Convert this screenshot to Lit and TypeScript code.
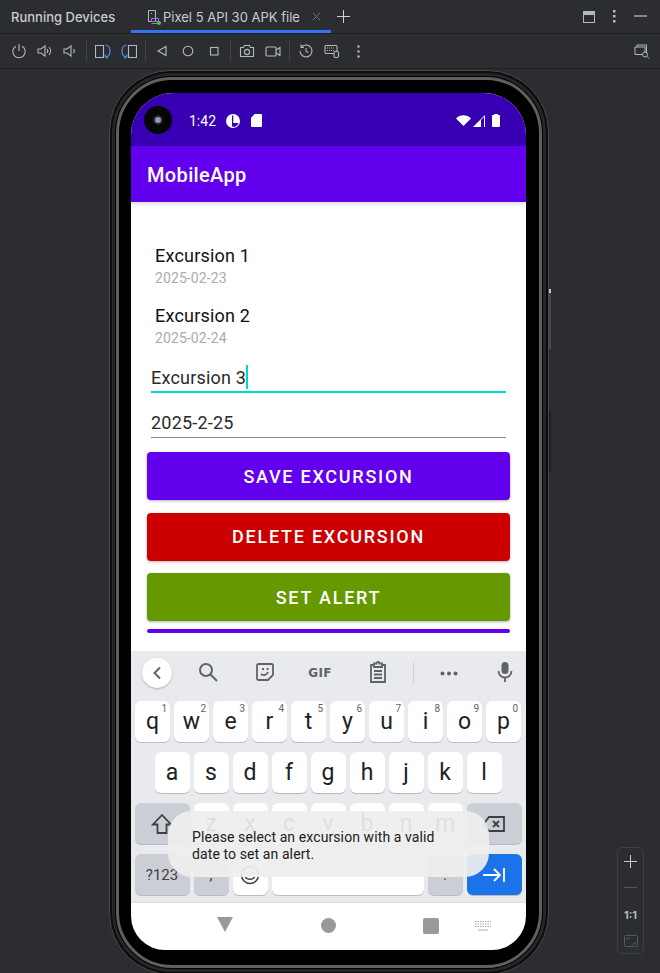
import { LitElement, html, css, svg } from "lit";
import { customElement } from "lit/decorators.js";

const ROW1 = [["q", "1"], ["w", "2"], ["e", "3"], ["r", "4"], ["t", "5"], ["y", "6"], ["u", "7"], ["i", "8"], ["o", "9"], ["p", "0"]];
const ROW2 = ["a", "s", "d", "f", "g", "h", "j", "k", "l"];
const ROW3 = ["z", "x", "c", "v", "b", "n", "m"];

const ic = (w: number, h: number, body: unknown) => html`<svg width=${w} height=${h} viewBox="0 0 ${w} ${h}" fill="none" stroke="#b4b8bf" stroke-width="1.1">${body}</svg>`;

const toolbarLeft = [
  [ic(16, 16, svg`<path d="M4.800 3.200a6.200 6.200 0 1 0 6.400 0M8 1v7"/>`),
   ic(16, 16, svg`<path d="M1 6h3l4-3.200v10.400l-4-3.200H1zM10 6a3 3 0 0 1 0 4M12 4a6 6 0 0 1 0 8"/>`),
   ic(14, 16, svg`<path d="M1 6h3l4-3.200v10.400l-4-3.200H1zM10.500 6a3 3 0 0 1 0 4"/>`)],
  [ic(16, 16, svg`<path d="M.5 2.500h8v12h-8z"/><path stroke="#4f8ff0" d="M10.500 2c3 .5 4.500 2.500 4.500 6 0 3-1.500 5.500-4.500 6.200M10 11.500l.5 2.700 2.500 .8"/>`),
   ic(16, 16, svg`<path stroke="#4f8ff0" d="M5.500 2c-3 .5-4.500 2.500-4.500 6 0 3 1.500 5.500 4.500 6.200M6 11.500l-.5 2.700-2.500 .8"/><path d="M7.500 2.500h8v12h-8z"/>`)],
  [ic(16, 16, svg`<path d="M12 3.500v9L4 8z"/>`),
   ic(16, 16, svg`<circle cx="8" cy="8" r="4.800"/>`),
   ic(16, 16, svg`<rect x="4.500" y="4.500" width="7.500" height="7.500"/>`)],
  [ic(16, 16, svg`<path d="M1.500 4.500h3l1-2h5l1 2h3v9h-13z"/><circle cx="8" cy="9" r="2.600"/>`),
   ic(16, 16, svg`<rect x="1" y="4" width="10" height="9" rx="1"/><path d="M11 7l4-2.500v8L11 10"/>`)],
  [ic(16, 16, svg`<path d="M3.300 4.200A6 6 0 1 1 2 8M3 1.500v3h3M8 5v3.500l2.500 1"/>`),
   ic(16, 16, svg`<rect x="1" y="2.500" width="12" height="8" rx="1"/><path d="M3 5h8M3 7.500h8" stroke-dasharray="1 1"/><rect x="10" y="8.500" width="4.500" height="6" rx="1.500" fill="#2b2d30"/>`)],
];

@customElement("app-root")
export class AppRoot extends LitElement {
  static styles = css`
    :host { display: block; width: 660px; height: 973px; overflow: hidden; background: #2b2d30; font-family: Roboto, "Liberation Sans", sans-serif; }
    .tabs { height: 33px; display: flex; align-items: center; border-bottom: 1px solid #1e1f22; font-family: Inter, "Noto Sans", sans-serif; color: #c9ccd2; font-size: 13px; }
    .tabs .title { margin-left: 11px; width: 134px; font-weight: 500; }
    .tab { width: 200px; box-sizing: border-box; height: 33px; display: flex; align-items: center; border-bottom: 3px solid #3574f0; margin-left: -14px; padding: 3px 0 0 14px; }
    .tab .x { margin-left: 12px; display: flex; }
    .tabs .plus { margin-left: 6px; display: flex; }
    .tabs .right { margin-left: auto; display: flex; align-items: center; gap: 18px; padding-right: 13px; }
    .toolbar { height: 34px; display: flex; align-items: center; padding-left: 11px; border-bottom: 1px solid #1e1f22; }
    .group { display: flex; gap: 10px; align-items: center; }
    .sep { width: 1px; height: 20px; background: #43454a; margin: 0 8px; }
    .group:first-child + .sep { margin-left: 9px; }
    .toolbar svg { display: block; }
    .toolbar .more { margin-left: 17px; }
    .toolbar .end { margin-left: auto; margin-right: 10px; }

    .viewport { display: flex; justify-content: center; position: relative; padding: 1px 2px 0 0; }
    .zoom { position: absolute; left: 617px; top: 778px; width: 27px; height: 107px; box-sizing: border-box; border: 1px solid #3d3f43; border-radius: 5px; display: flex; flex-direction: column; align-items: center; color: #b4b8bf; font-size: 11px; font-weight: 700; font-family: Inter, sans-serif; }
    .zoom .p { margin-top: 7px; }
    .zoom .m { margin-top: 19px; width: 13px; height: 1px; background: #55585d; }
    .zoom .r { margin-top: 20px; }
    .zoom .f { margin-top: 13px; }

    .device { width: 440px; height: 905px; box-sizing: border-box; border-radius: 62px; background: #0c0c0c; border: 1px solid #48494b; padding: 2px; flex: none; position: relative; }
    .ring1 { height: 100%; box-sizing: border-box; border-radius: 60px; border: 3px solid #262626; background: #000; padding: 1px; }
    .ring2 { height: 100%; box-sizing: border-box; border-radius: 56px; border: 3px solid #5f5f5f; background: #000; padding: 13px 9px 0 12px; }
    .side { position: absolute; right: -3px; width: 2px; }
    .side.a { top: 218px; height: 4px; background: #c9c9c9; }
    .side.c { top: 222px; height: 56px; background: #45474a; }
    .side.b { top: 340px; height: 60px; background: #1c1d20; }

    .screen { width: 395px; height: 857px; border-radius: 42px 42px 34px 34px; overflow: hidden; background: #fff; position: relative; display: flex; flex-direction: column; }
    .status { height: 53px; flex: none; background: #3700b3; display: flex; align-items: center; color: #fff; font-size: 14px; padding: 2px 26px 0 13px; box-sizing: border-box; }
    .camera { width: 28px; height: 28px; border-radius: 50%; background: #050505; display: flex; align-items: center; justify-content: center; margin: -2px 17px 0 0; }
    .camera i { width: 6px; height: 6px; border-radius: 50%; background: #8e9bb0; border: 2px solid #24262c; }
    .status .time { margin-right: 10px; font-size: 14px; }
    .status .ics { display: flex; gap: 11px; align-items: center; }
    .status .rgt { margin-left: auto; display: flex; gap: 2px; align-items: center; }
    .status .batt { margin-left: 4px; }
    .status svg { display: block; }
    .appbar { height: 56px; flex: none; background: #6200ee; color: #fff; font-size: 20px; font-weight: 500; letter-spacing: .35px; display: flex; align-items: center; padding: 2px 0 0 16px; box-sizing: border-box; box-shadow: 0 2px 4px rgba(0,0,0,.15); position: relative; }
    .content { height: 449px; flex: none; box-sizing: border-box; padding: 42px 16px 0; display: flex; flex-direction: column; }
    .item { padding-left: 8px; }
    .item.first { margin-bottom: 16px; }
    .item .n { font-size: 18px; color: #111; line-height: 24px; letter-spacing: .2px; }
    .item .d { font-size: 14px; color: #ababab; line-height: 20px; letter-spacing: .1px; }
    .field { margin: 0 4px; width: 355px; font-size: 18px; color: #2a2a2a; height: 45px; box-sizing: border-box; border-bottom: 1px solid #8a8a8a; display: flex; align-items: flex-end; padding-bottom: 2px; line-height: 24px; letter-spacing: .2px; }
    .field.focus { border-bottom: 2px solid #03dac5; padding-bottom: 1px; height: 46px; margin-top: -1px; }
    .caret { width: 2px; height: 24px; background: #03dac5; margin-bottom: 1px; }
    .btn { height: 48px; width: 363px; border-radius: 4px; color: #fff; font-size: 18px; font-weight: 500; letter-spacing: 1.75px; display: flex; align-items: center; justify-content: center; box-shadow: 0 1px 3px rgba(0,0,0,.3); flex: none; margin-top: 12.5px; }
    .btn.first { margin-top: 14px; }
    .btn.save { background: #6200ee; }
    .btn.del { background: #cc0000; }
    .btn.alert { background: #669900; }
    .bar { height: 4px; width: 363px; background: #6200ee; border-radius: 2px; margin-top: 8px; flex: none; }

    .kbd { height: 252px; flex: none; background: #e8eaed; box-sizing: border-box; padding: 0 4px; display: flex; flex-direction: column; border-bottom: 1px solid #dadce0; }
    .strip { height: 50px; display: flex; align-items: center; flex: none; position: relative; }
    .strip .back { width: 30px; height: 30px; border-radius: 50%; background: #fff; box-shadow: 0 1px 2px rgba(0,0,0,.25); display: flex; align-items: center; justify-content: center; margin: -6px 0 0 7px; }
    .strip .tool { position: absolute; top: 10px; transform: translateX(-50%); display: flex; }
    .strip .tool.dots { top: 20px; }
    .gif { font-family: "DejaVu Sans", sans-serif; font-weight: 700; font-size: 12px; color: #5f6368; letter-spacing: .3px; line-height: 24px; }
    .strip .div { position: absolute; left: 278px; top: 11px; width: 1px; height: 22px; background: #cfd1d4; }
    .row { display: flex; gap: 4px; justify-content: center; height: 42px; flex: none; margin-bottom: 9px; margin-left: -1px; }
    .key { width: 35px; height: 41px; border-radius: 6px; background: #fff; box-shadow: 0 1px 0 #b9bbbf; display: flex; align-items: center; justify-content: center; font-size: 23px; color: #202124; position: relative; }
    .key sup { position: absolute; top: 2px; right: 3px; font-size: 10px; line-height: 12px; color: #5f6368; }
    .key.fn { background: #ccced5; }
    .key.wide { width: 55px; }
    .key.space { width: 152px; }
    .key.go { width: 55px; background: #1a73e8; }
    .key.sym { font-size: 15px; color: #3c4043; }
    .nav { flex: 1; position: relative; }
    .nav svg { position: absolute; }
    .toast { position: absolute; left: 37px; top: 718px; width: 321px; height: 66px; box-sizing: border-box; border-radius: 24px; background: rgba(238,238,238,.93); color: #202020; font-size: 14px; line-height: 17px; letter-spacing: .1px; padding: 18px 50px 0 24px; }
  `;

  private field(text: string, focus: boolean) {
    return html`<div class="field ${focus ? "focus" : ""}">${text}${focus ? html`<span class="caret"></span>` : ""}</div>`;
  }

  render() {
    return html`
      <div class="tabs">
        <span class="title">Running Devices</span>
        <div class="tab">
          <svg width="18" height="18" viewBox="0 0 18 18" fill="none" stroke="#b4b8bf"><path d="M3.500 2.500h7v11h-7zM6 5.500h1"/><path stroke="#a074e0" d="M6.500 10.500h7v3h-7zM6.500 15.500h7"/><circle cx="14" cy="15" r="2" fill="#3fcf3f" stroke="none"/></svg>
          <span>Pixel 5 API 30 APK file</span>
          <span class="x"><svg width="9" height="9" viewBox="0 0 9 9" stroke="#6f737a" fill="none"><path d="M1 1l7 7M8 1l-7 7"/></svg></span>
        </div>
        <span class="plus"><svg width="13" height="13" viewBox="0 0 13 13" stroke="#ced0d6" fill="none"><path d="M6.500 0v13M0 6.500h13"/></svg></span>
        <div class="right">
          <svg width="12" height="12" viewBox="0 0 12 12" fill="none" stroke="#b4b8bf"><rect x=".5" y=".5" width="11" height="11"/><rect x="0" y="0" width="12" height="4" fill="#b4b8bf" stroke="none"/></svg>
          <svg width="3" height="13" viewBox="0 0 3 13" fill="#b4b8bf"><rect y="0" width="2.500" height="2.500"/><rect y="5" width="2.500" height="2.500"/><rect y="10" width="2.500" height="2.500"/></svg>
          <svg width="13" height="3" viewBox="0 0 13 3" fill="#85888e"><rect width="13" height="2"/></svg>
        </div>
      </div>
      <div class="toolbar">
        ${toolbarLeft.map((g, i) => html`${i ? html`<span class="sep"></span>` : ""}<div class="group">${g}</div>`)}
        <svg class="more" width="3" height="13" viewBox="0 0 3 13" fill="#b4b8bf"><circle cx="1.500" cy="1.500" r="1.200"/><circle cx="1.500" cy="6.500" r="1.200"/><circle cx="1.500" cy="11.500" r="1.200"/></svg>
        <svg class="end" width="16" height="16" viewBox="0 0 16 16" fill="none" stroke="#b4b8bf"><path d="M3 3V1h9.500v8H11M1 3h10v7.500H1z" transform="translate(0 1)"/><circle cx="11" cy="11.500" r="2.500" fill="#2b2d30"/><path d="M13 13.500l2 2"/></svg>
      </div>
      <div class="viewport">
        <div class="device">
          <span class="side a"></span><span class="side c"></span><span class="side b"></span>
          <div class="ring1"><div class="ring2">
            <div class="screen">
              <div class="status">
                <span class="camera"><i></i></span>
                <span class="time">1:42</span>
                <span class="ics">
                  <svg width="14" height="14" viewBox="0 0 14 14"><circle cx="7" cy="7" r="7" fill="#fff"/><path d="M6 1.500h1.300v11H6zM7.300 9h5.200a6 6 0 0 1-5.200 4z" fill="#3700b3"/></svg>
                  <svg width="11" height="13" viewBox="0 0 11 13"><path d="M3.500 0H10a1 1 0 0 1 1 1v11a1 1 0 0 1-1 1H1a1 1 0 0 1-1-1V4z" fill="#fff"/></svg>
                </span>
                <span class="rgt">
                  <svg width="15" height="11" viewBox="0 0 15 11"><path d="M0 3.500C4 -.9 11 -.9 15 3.500L7.500 11z" fill="#fff"/></svg>
                  <svg width="13" height="12" viewBox="0 0 13 12"><path d="M0 12L12 0v12z" fill="#fff"/><path d="M8 5v7h3V2z" fill="#3700b3"/><path d="M11.500 1v11" stroke="#fff"/></svg>
                  <svg class="batt" width="8" height="13" viewBox="0 0 8 13"><path d="M2 0h4v1h1a1 1 0 0 1 1 1v10a1 1 0 0 1-1 1H1a1 1 0 0 1-1-1V2a1 1 0 0 1 1-1h1z" fill="#fff"/></svg>
                </span>
              </div>
              <div class="appbar">MobileApp</div>
              <div class="content">
                <div class="item first"><div class="n">Excursion 1</div><div class="d">2025-02-23</div></div>
                <div class="item"><div class="n">Excursion 2</div><div class="d">2025-02-24</div></div>
                ${this.field("Excursion 3", true)}
                ${this.field("2025-2-25", false)}
                <div class="btn save first">SAVE EXCURSION</div>
                <div class="btn del">DELETE EXCURSION</div>
                <div class="btn alert">SET ALERT</div>
                <div class="bar"></div>
              </div>
              <div class="kbd">
                <div class="strip">
                  <span class="back"><svg width="10" height="14" viewBox="0 0 10 14" fill="none" stroke="#5f6368" stroke-width="2"><path d="M8 1.500L2.500 7 8 12.500"/></svg></span>
                  <span class="tool" style="left:73px"><svg width="22" height="22" viewBox="0 0 22 22" fill="none" stroke="#5f6368" stroke-width="2"><circle cx="9" cy="9" r="6"/><path d="M13.500 13.500L20 20"/></svg></span>
                  <span class="tool" style="left:130px"><svg width="20" height="22" viewBox="0 0 20 22" fill="none" stroke="#5f6368" stroke-width="1.800"><path d="M3.500 3h13a1.500 1.500 0 0 1 1.500 1.500V14l-5 5H3.500A1.500 1.500 0 0 1 2 17.500v-13A1.500 1.500 0 0 1 3.500 3z"/><path d="M6 13c2.500 2 6 1 7-2M7 8h2M12.500 7v2"/></svg></span>
                  <span class="tool gif" style="left:185px">GIF</span>
                  <span class="tool" style="left:243px"><svg width="18" height="24" viewBox="0 0 18 24" fill="none" stroke="#5f6368" stroke-width="1.800"><path d="M5 4H2v17h14V4h-3M5 2.500h2.500a1.500 1.500 0 0 1 3 0H13V6H5zM5 10h8M5 13.500h8M5 17h8"/></svg></span>
                  <span class="div"></span>
                  <span class="tool dots" style="left:314px"><svg width="18" height="5" viewBox="0 0 18 5" fill="#5f6368"><circle cx="2.500" cy="2.500" r="2"/><circle cx="9" cy="2.500" r="2"/><circle cx="15.500" cy="2.500" r="2"/></svg></span>
                  <span class="tool" style="left:370px"><svg width="16" height="22" viewBox="0 0 16 22" fill="none"><rect x="4.500" y="1" width="7" height="12" rx="3.500" fill="#5f6368"/><path d="M1.500 10a6.500 6.500 0 0 0 13 0M8 16.500V21" stroke="#5f6368" stroke-width="1.800"/></svg></span>
                </div>
                <div class="row">${ROW1.map(([k, n]) => html`<span class="key">${k}<sup>${n}</sup></span>`)}</div>
                <div class="row">${ROW2.map((k) => html`<span class="key">${k}</span>`)}</div>
                <div class="row">
                  <span class="key fn wide"><svg width="22" height="22" viewBox="0 0 22 22" fill="none" stroke="#3c4043" stroke-width="1.800"><path d="M11 2L2 11.500h4.500V20h9v-8.500H20z"/></svg></span>
                  ${ROW3.map((k) => html`<span class="key">${k}</span>`)}
                  <span class="key fn wide"><svg width="24" height="18" viewBox="0 0 24 18" fill="none" stroke="#3c4043" stroke-width="1.800"><path d="M7 2h15v14H7L1.500 9zM11 6l6 6M17 6l-6 6"/></svg></span>
                </div>
                <div class="row">
                  <span class="key fn wide sym">?123</span>
                  <span class="key fn sym">,</span>
                  <span class="key"><svg width="20" height="20" viewBox="0 0 20 20" fill="none" stroke="#3c4043" stroke-width="1.500"><circle cx="10" cy="10" r="8.500"/><path d="M5.500 12c1.500 3 7.500 3 9 0M7 7v1.500M13 7v1.500"/></svg></span>
                  <span class="key space"></span>
                  <span class="key fn sym">.</span>
                  <span class="key go"><svg width="22" height="14" viewBox="0 0 22 14" fill="none" stroke="#fff" stroke-width="1.800"><path d="M0 7h17M11 1l6 6-6 6M21 0v14"/></svg></span>
                </div>
              </div>
              <div class="nav">
                <svg style="left:86px;top:14px" width="16" height="15" viewBox="0 0 16 15"><path d="M0 0h16L8 15z" fill="#999"/></svg>
                <svg style="left:190px;top:15px" width="15" height="15" viewBox="0 0 15 15"><circle cx="7.500" cy="7.500" r="7.500" fill="#999"/></svg>
                <svg style="left:292px;top:15px" width="16" height="16" viewBox="0 0 16 16"><rect width="16" height="16" rx="2" fill="#999"/></svg>
                <svg style="left:344px;top:18px" width="16" height="10" viewBox="0 0 16 10" fill="none" stroke="#aaa"><path d="M0 .5h16M0 3h16M0 5.500h16" stroke-dasharray="1.500 1"/><path d="M3 9h10"/></svg>
              </div>
              <div class="toast">Please select an excursion with a valid date to set an alert.</div>
            </div>
          </div></div>
        </div>
        <div class="zoom">
          <svg class="p" width="13" height="13" viewBox="0 0 13 13" stroke="#c9ccd2" fill="none"><path d="M6.500 0v13M0 6.500h13"/></svg>
          <span class="m"></span>
          <span class="r">1:1</span>
          <svg class="f" width="14" height="12" viewBox="0 0 14 12" fill="none" stroke="#55585d"><rect x=".5" y=".5" width="13" height="11" rx="1"/><path d="M3 5V3h3M11 7v2H8"/></svg>
        </div>
      </div>
    `;
  }
}
